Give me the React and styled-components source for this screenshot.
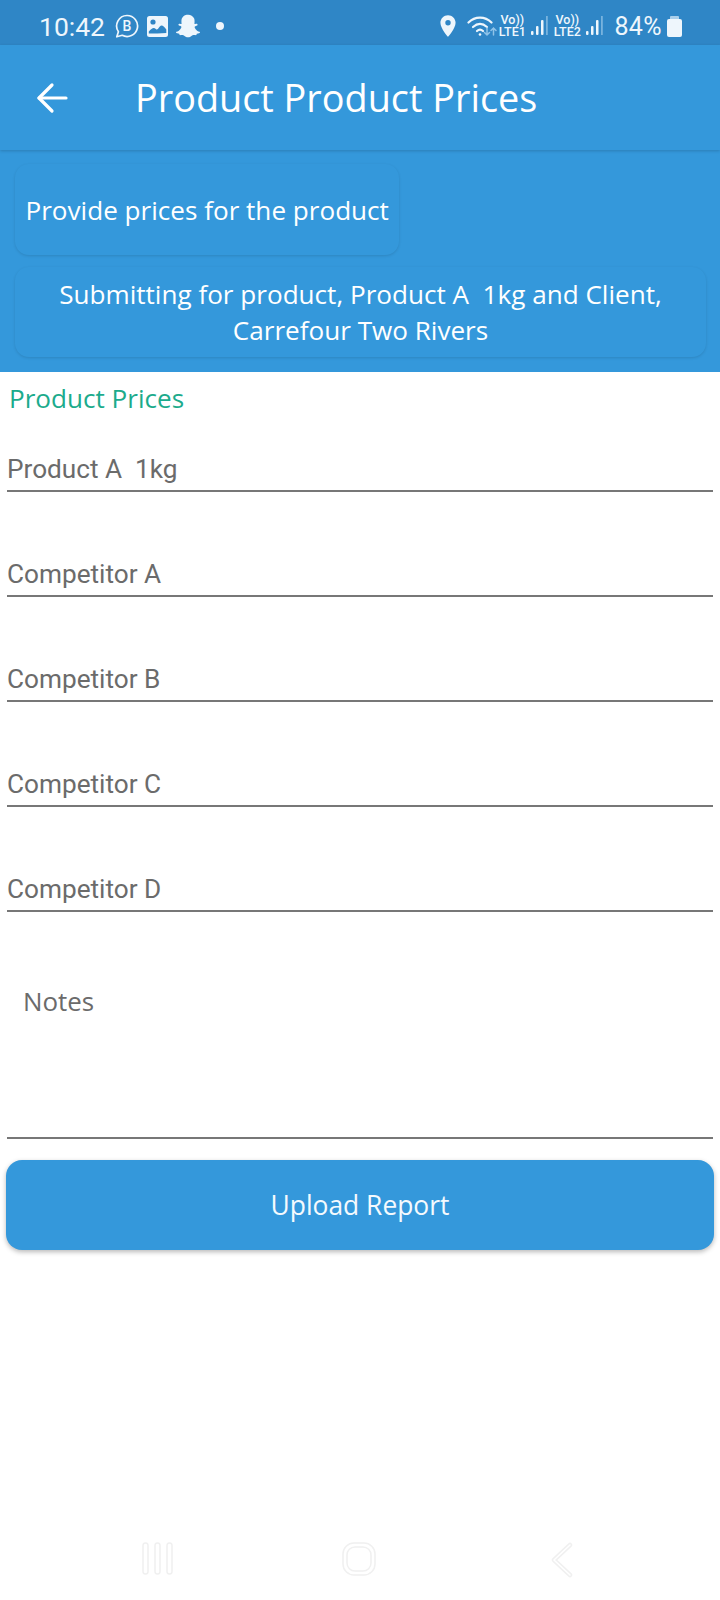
import { createGlobalStyle, styled } from "styled-components"
import { FaSnapchatGhost } from "react-icons/fa"
import { MdLocationOn } from "react-icons/md"

const GlobalStyle = createGlobalStyle`
  html, body {
    margin: 0;
    padding: 0;
    background: #fff;
  }
  * {
    box-sizing: border-box;
  }
`

const Page = styled.div`
  width: 720px;
  height: 1600px;
  display: flex;
  flex-direction: column;
  background: #fff;
  overflow: hidden;
  font-family: "Open Sans", sans-serif;
`

const StatusBar = styled.div`
  height: 45px;
  flex: none;
  display: flex;
  align-items: center;
  padding: 7px 0 0 39px;
  background: #2f86c6;
  color: #eef6fc;
  font-family: Roboto, sans-serif;
`

const Clock = styled.span`
  font-size: 26.5px;
  width: 76px;
`

const StatusIcons = styled.div`
  display: flex;
  align-items: center;
  gap: 8px;
`

const Dot = styled.span`
  width: 8px;
  height: 8px;
  margin-left: 16px;
  border-radius: 50%;
  background: #eef6fc;
`

const StatusRight = styled.div`
  margin-left: auto;
  display: flex;
  align-items: center;
  padding-right: 38px;
`

const LocationIcon = styled(MdLocationOn)`
  margin-right: 6px;
`

const Sim = styled.div`
  width: 36px;
  display: flex;
  flex-direction: column;
  align-items: center;
  font-size: 12.5px;
  line-height: 12px;
  font-weight: 500;
`

const Battery = styled.div`
  position: relative;
  width: 15px;
  height: 18px;
  margin: 3px 0 0 5px;
  border-radius: 2px;
  background: #eef6fc;

  &::before {
    content: "";
    position: absolute;
    left: 3px;
    top: -3px;
    width: 9px;
    height: 3px;
    border-radius: 1px 1px 0 0;
    background: #a9cfeb;
  }
`

const Percent = styled.span`
  font-size: 25px;
  margin-left: 10px;
  letter-spacing: 0.4px;
`

const AppBar = styled.header`
  height: 105px;
  flex: none;
  display: flex;
  align-items: center;
  padding: 0 0 0 36px;
  background: #3498db;
  box-shadow: 0 1px 3px rgba(0, 0, 0, 0.18);
  position: relative;
`

const Title = styled.h1`
  margin: 0 0 0 67px;
  font-size: 37.8px;
  font-weight: 400;
  color: #fff;
`

const Banner = styled.section`
  height: 222px;
  flex: none;
  padding: 14px 14px 0 15px;
  background: #3498db;
`

const Card = styled.div`
  display: flex;
  align-items: center;
  justify-content: center;
  width: ${(props) => (props.$fit ? "fit-content" : "100%")};
  height: ${(props) => (props.$fit ? "91px" : "90px")};
  margin-bottom: 12px;
  padding: 0 10.5px;
  border-radius: 14px;
  box-shadow: 0 1px 3px rgba(0, 0, 0, 0.12);
  color: #fff;
  font-size: 26.1px;
  line-height: 36px;
  text-align: center;
  white-space: pre-line;
`

const Form = styled.section`
  padding: 0 7px;
`

const SectionTitle = styled.div`
  height: 50px;
  padding: 8px 0 0 2px;
  color: #1cab8c;
  font-size: 26.1px;
  line-height: 36px;
`

const Field = styled.div`
  height: ${(props) => (props.$first ? "70px" : "105px")};
  display: flex;
  align-items: flex-end;
  padding-bottom: 3px;
  border-bottom: 2px solid #777;
  color: #6b6b6b;
  font-family: Roboto, sans-serif;
  font-size: 26.2px;
  line-height: 36px;
  white-space: pre;
`

const Notes = styled.div`
  height: 227px;
  padding: 71px 0 0 16px;
  border-bottom: 2px solid #777;
  color: #6b6b6b;
  font-size: 25.9px;
  line-height: 36px;
`

const UploadButton = styled.button`
  display: block;
  width: 708px;
  height: 90px;
  margin: 21px 0 0 -1px;
  border: 0;
  border-radius: 16px;
  background: #3498db;
  box-shadow: 0 2px 5px rgba(0, 0, 0, 0.28);
  color: #f4fafe;
  font-family: "Open Sans", sans-serif;
  font-size: 26.4px;
`

const NavBar = styled.nav`
  margin-top: auto;
  height: 58px;
  display: flex;
  align-items: flex-start;
  color: #f0f0f0;
`

const NavSlot = styled.div`
  display: flex;
  margin-left: ${(props) => props.$left}px;
`

const WifiSvg = styled.svg`
  margin-right: -3px;
`

const BusinessIcon = () => (
  <svg width="24" height="24" viewBox="0 0 24 24" fill="none">
    <path
      d="M12 1.500a10.500 10.500 0 1 1-4.800 19.800L1.800 22.800l1.600-5A10.500 10.500 0 0 1 12 1.500z"
      stroke="currentColor"
      strokeWidth="1.700"
      strokeLinejoin="round"
    />
    <text x="12" y="17" textAnchor="middle" fontSize="14" fontWeight="500" fontFamily="Roboto, sans-serif" fill="currentColor">
      B
    </text>
  </svg>
)

const PictureIcon = () => (
  <svg width="21" height="21" viewBox="0 0 21 21">
    <rect width="21" height="21" rx="2.500" fill="currentColor" />
    <circle cx="6" cy="6" r="2.600" fill="#2f86c6" />
    <path d="M1.800 15.500c3-3.500 5-4.500 7-2.500 2.200 2.200 3.500-3.500 5.500-3.500s3.500 2 5 4v3.500c-6 .5-12 .5-17.500.5z" fill="#2f86c6" />
  </svg>
)

const WifiIcon = () => (
  <WifiSvg width="30" height="22" viewBox="0 0 30 22" fill="none" stroke="currentColor" strokeLinecap="round">
    <path d="M1.500 7.500C8 1 18 1 24.500 7.500" strokeWidth="2.200" />
    <path d="M6 12c4.500-4 9.500-4 14 0" strokeWidth="2.200" />
    <path d="M10 16c2-1.800 4-1.800 6 0" strokeWidth="2.200" />
    <circle cx="13" cy="19.500" r="1.300" fill="currentColor" stroke="none" />
    <path d="M20 13v7m-2.500-2.500L20 20l2.500-2.500" stroke="#8fc3e8" strokeWidth="1.500" />
    <path d="M26.500 20v-7M24 15.500l2.500-2.500 2.500 2.500" stroke="#8fc3e8" strokeWidth="1.500" />
  </WifiSvg>
)

const SignalIcon = () => (
  <svg width="19" height="20" viewBox="0 0 19 20" fill="currentColor">
    <rect x="1" y="15" width="2.500" height="4" rx="1" />
    <rect x="6" y="10" width="2.500" height="9" rx="1" />
    <rect x="11" y="4" width="2.500" height="15" rx="1" />
    <rect x="16" y="0" width="1.800" height="19" fill="#78b3de" />
  </svg>
)

const BackArrow = () => (
  <svg width="32" height="32" viewBox="0 0 32 32" fill="none" stroke="#fff" strokeWidth="3.200" strokeLinecap="round" strokeLinejoin="round">
    <path d="M30 16H3" />
    <path d="M16 3L3 16l13 13" />
  </svg>
)

const MenuIcon = () => (
  <svg width="32" height="34" viewBox="0 0 32 34" fill="none" stroke="currentColor" strokeWidth="1.500">
    <rect x="1" y="1" width="5" height="31" rx="2.500" />
    <rect x="13" y="1" width="5" height="31" rx="2.500" />
    <rect x="25" y="1" width="5" height="31" rx="2.500" />
  </svg>
)

const HomeIcon = () => (
  <svg width="34" height="34" viewBox="0 0 34 34" fill="none" stroke="currentColor" strokeWidth="1.500">
    <rect x="1" y="1" width="32" height="32" rx="11" />
    <rect x="5" y="5" width="24" height="24" rx="8" />
  </svg>
)

const NavBackIcon = () => (
  <svg width="24" height="36" viewBox="0 0 24 36" fill="none" strokeLinecap="round" strokeLinejoin="round">
    <path d="M20 3L4 18l16 15" stroke="currentColor" strokeWidth="4.500" />
    <path d="M20 3L4 18l16 15" stroke="#fff" strokeWidth="1.600" />
  </svg>
)

const fields = ["Competitor A", "Competitor B", "Competitor C", "Competitor D"]

const App = () => {
  return (
    <Page>
      <GlobalStyle />
      <StatusBar>
        <Clock>10:42</Clock>
        <StatusIcons>
          <BusinessIcon />
          <PictureIcon />
          <FaSnapchatGhost size={24} />
        </StatusIcons>
        <Dot />
        <StatusRight>
          <LocationIcon size={26} />
          <WifiIcon />
          <Sim>
            <span>Vo))</span>
            <span>LTE1</span>
          </Sim>
          <SignalIcon />
          <Sim>
            <span>Vo))</span>
            <span>LTE2</span>
          </Sim>
          <SignalIcon />
          <Percent>84%</Percent>
          <Battery />
        </StatusRight>
      </StatusBar>
      <AppBar>
        <BackArrow />
        <Title>Product Product Prices</Title>
      </AppBar>
      <Banner>
        <Card $fit>Provide prices for the product</Card>
        <Card>{"Submitting for product, Product A\u00a0 1kg and Client,\nCarrefour Two Rivers"}</Card>
      </Banner>
      <Form>
        <SectionTitle>Product Prices</SectionTitle>
        <Field $first>Product A  1kg</Field>
        {fields.map((name) => (
          <Field key={name}>{name}</Field>
        ))}
        <Notes>Notes</Notes>
        <UploadButton>Upload Report</UploadButton>
      </Form>
      <NavBar>
        <NavSlot $left={142}>
          <MenuIcon />
        </NavSlot>
        <NavSlot $left={168}>
          <HomeIcon />
        </NavSlot>
        <NavSlot $left={174}>
          <NavBackIcon />
        </NavSlot>
      </NavBar>
    </Page>
  )
}

export default App
